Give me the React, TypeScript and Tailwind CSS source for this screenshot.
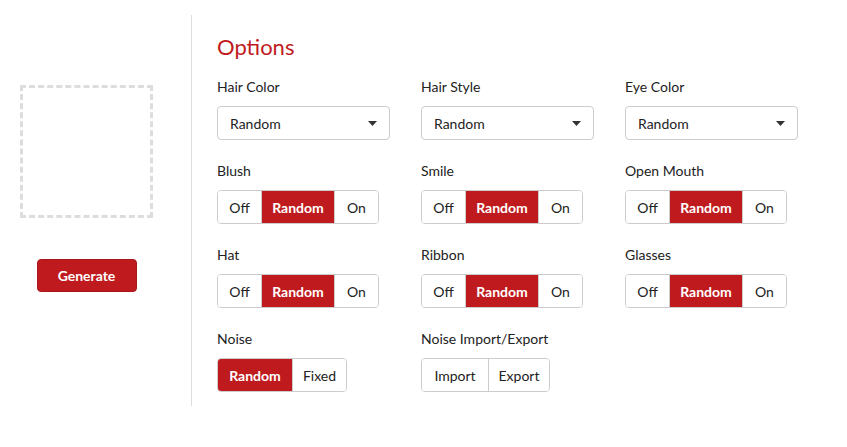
import React from "react";

const font = { fontFamily: "Lato, 'Noto Sans', sans-serif" };

function Select() {
  return (
    <div className="flex h-[34px] w-[173px] items-center justify-between rounded-[4px] border border-[#cccccc] bg-white pl-[12px] pr-[12px] text-[14px] text-[#222]">
      <span>Random</span>
      <svg width="9" height="5" viewBox="0 0 9 5"><path d="M0 0h9L4.5 5z" fill="#333" /></svg>
    </div>
  );
}

function Seg({ items, active }: { items: { label: string; w: string }[]; active: number }) {
  return (
    <div className="flex h-[34px] w-max overflow-hidden rounded-[4px] border border-[#cccccc] text-[14px]">
      {items.map((it, i) => (
        <div
          key={it.label}
          className={
            "flex items-center justify-center " +
            it.w +
            (i > 0 ? " border-l border-[#cccccc]" : "") +
            (i === active ? " bg-[#bf1b1e] font-bold text-white" : " bg-white text-[#222]")
          }
        >
          {it.label}
        </div>
      ))}
    </div>
  );
}

const ORO = [
  { label: "Off", w: "w-[43px]" },
  { label: "Random", w: "w-[73px]" },
  { label: "On", w: "w-[44px]" },
];

function Field({ label, children }: { label: string; children: React.ReactNode }) {
  return (
    <div className="flex w-[204px] flex-col">
      <div className="mb-[11px] h-[17px] text-[14px] leading-[17px] text-[#222]">{label}</div>
      {children}
    </div>
  );
}

export default function App() {
  return (
    <div className="flex h-[447px] w-[847px] bg-white" style={font}>
      <div className="flex w-[191px] flex-col items-center pt-[85px]">
        <div className="ml-[-18px] h-[133px] w-[133px] border-[3px] border-dashed border-[#dddddd]" />
        <button className="mt-[41px] ml-[-18px] h-[33px] w-[100px] rounded-[4px] border border-[#a8171a] bg-[#bf1b1e] text-[14px] font-bold text-white">
          Generate
        </button>
      </div>
      <div className="mt-[15px] h-[391px] w-px bg-[#dddddd]" />
      <div className="flex flex-col pl-[25px] pt-[33px]">
        <div className="h-[28px] text-[22px] leading-[28px] text-[#bf1b1e]">Options</div>
        <div className="mt-[17px] flex flex-col gap-[22px]">
          <div className="flex">
            <Field label="Hair Color"><Select /></Field>
            <Field label="Hair Style"><Select /></Field>
            <Field label="Eye Color"><Select /></Field>
          </div>
          <div className="flex">
            <Field label="Blush"><Seg items={ORO} active={1} /></Field>
            <Field label="Smile"><Seg items={ORO} active={1} /></Field>
            <Field label="Open Mouth"><Seg items={ORO} active={1} /></Field>
          </div>
          <div className="flex">
            <Field label="Hat"><Seg items={ORO} active={1} /></Field>
            <Field label="Ribbon"><Seg items={ORO} active={1} /></Field>
            <Field label="Glasses"><Seg items={ORO} active={1} /></Field>
          </div>
          <div className="flex">
            <Field label="Noise">
              <Seg items={[{ label: "Random", w: "w-[74px]" }, { label: "Fixed", w: "w-[54px]" }]} active={0} />
            </Field>
            <Field label="Noise Import/Export">
              <Seg items={[{ label: "Import", w: "w-[66px]" }, { label: "Export", w: "w-[61px]" }]} active={-1} />
            </Field>
          </div>
        </div>
      </div>
    </div>
  );
}
